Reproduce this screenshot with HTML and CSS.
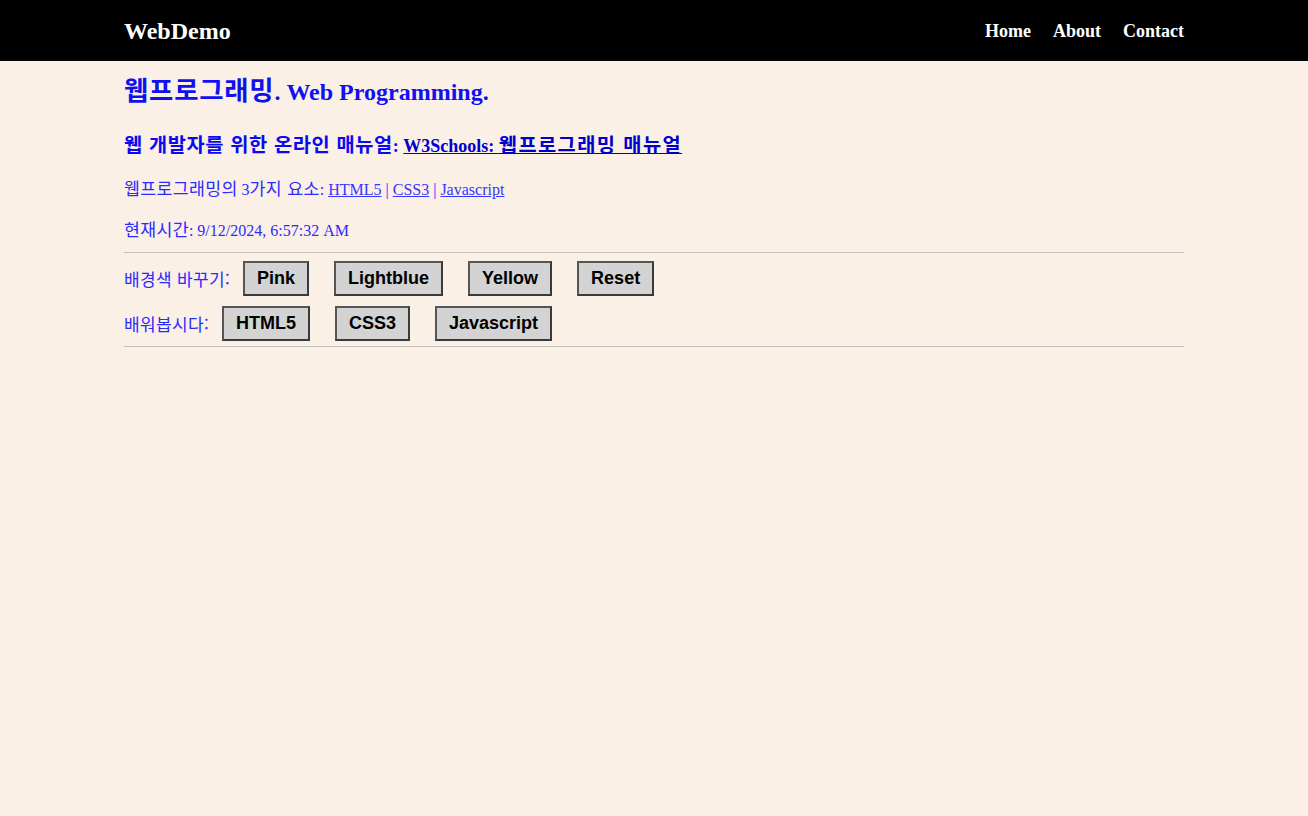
FILE: index.html
```html
<!DOCTYPE html>
<html lang="ko">
<head>
<meta charset="utf-8">
<title>WebDemo</title>
<link rel="stylesheet" href="styles.css">
</head>
<body>
<header class="topbar">
  <div class="wrap topbar-inner">
    <div class="logo">WebDemo</div>
    <nav class="nav">
      <a href="#">Home</a>
      <a href="#">About</a>
      <a href="#">Contact</a>
    </nav>
  </div>
</header>
<main class="wrap content">
  <h2 class="title"><span class="ko">웹프로그래밍</span>. Web Programming.</h2>
  <h3 class="subtitle"><span class="ko">웹 개발자를 위한 온라인 매뉴얼</span>: <a href="#">W3Schools: <span class="ko">웹프로그래밍 매뉴얼</span></a></h3>
  <p class="line"><span class="ko">웹프로그래밍의</span> 3<span class="ko">가지 요소</span>: <a href="#">HTML5</a> | <a href="#">CSS3</a> | <a href="#">Javascript</a></p>
  <p class="line time"><span class="ko">현재시간</span>: 9/12/2024, 6:57:32 AM</p>
  <hr class="rule">
  <div class="row row-first">
    <span class="label">배경색 바꾸기:</span>
    <button class="btn">Pink</button>
    <button class="btn">Lightblue</button>
    <button class="btn">Yellow</button>
    <button class="btn">Reset</button>
  </div>
  <div class="row row-second">
    <span class="label">배워봅시다:</span>
    <button class="btn">HTML5</button>
    <button class="btn">CSS3</button>
    <button class="btn">Javascript</button>
  </div>
  <hr class="rule rule-bottom">
</main>
</body>
</html>
```
FILE: styles.css
```css
html, body {
  margin: 0;
  padding: 0;
}
body {
  background: #faf0e6;
  font-family: "Liberation Serif", "Noto Sans CJK KR", serif;
  color: #2b2bff;
  min-height: 816px;
}
.wrap {
  width: 1060px;
  margin: 0 auto;
  box-sizing: border-box;
}
.topbar {
  background: #000;
  height: 61px;
}
.topbar-inner {
  height: 61px;
  display: flex;
  align-items: center;
  justify-content: space-between;
}
.logo {
  color: #fff;
  font-weight: bold;
  font-size: 24px;
  line-height: 1;
}
.nav {
  display: flex;
  gap: 22px;
  padding-top: 2px;
}
.nav a {
  color: #fff;
  text-decoration: none;
  font-weight: bold;
  font-size: 18px;
}
.ko {
  font-family: "Noto Sans CJK KR", sans-serif;
  font-size: 1.08em;
  letter-spacing: 0.02em;
  line-height: 0;
}
.title .ko,
.subtitle .ko {
  font-size: 1.1em;
  letter-spacing: 0.03em;
}
.subtitle a .ko {
  letter-spacing: 0.07em;
}
.content {
  padding-top: 16px;
}
.title {
  margin: 0;
  font-size: 24px;
  line-height: 30px;
  height: 30px;
  color: #1010f0;
  font-weight: bold;
}
.subtitle {
  margin: 27px 0 0;
  font-size: 18px;
  line-height: 24px;
  height: 24px;
  color: #0a0aee;
  font-weight: bold;
}
.subtitle a {
  color: #0000cc;
}
.line {
  margin: 22px 0 0;
  font-size: 16px;
  line-height: 20px;
  height: 20px;
}
.line a {
  color: #3535ff;
}
.time {
  margin-top: 21px;
}
.rule {
  margin: 11px 0 0;
  border: 0;
  border-top: 1px solid #c4c0bb;
  height: 0;
}
.row {
  display: flex;
  align-items: center;
  gap: 25px;
}
.row-first {
  margin-top: 8px;
}
.row-second {
  margin-top: 10px;
}
.label {
  font-size: 17px;
  letter-spacing: 0.02em;
  margin-right: -12px;
  font-family: "Noto Sans CJK KR", "Liberation Sans", sans-serif;
}
.btn {
  font-family: "Liberation Sans", Arial, sans-serif;
  font-weight: bold;
  font-size: 18px;
  line-height: 21px;
  padding: 5px 12px;
  background: #d3d3d3;
  color: #000;
  border: 2px solid #3a3a3a;
  border-top-color: #555;
  border-left-color: #555;
  border-radius: 0;
}
.rule-bottom {
  margin-top: 5px;
}
```
